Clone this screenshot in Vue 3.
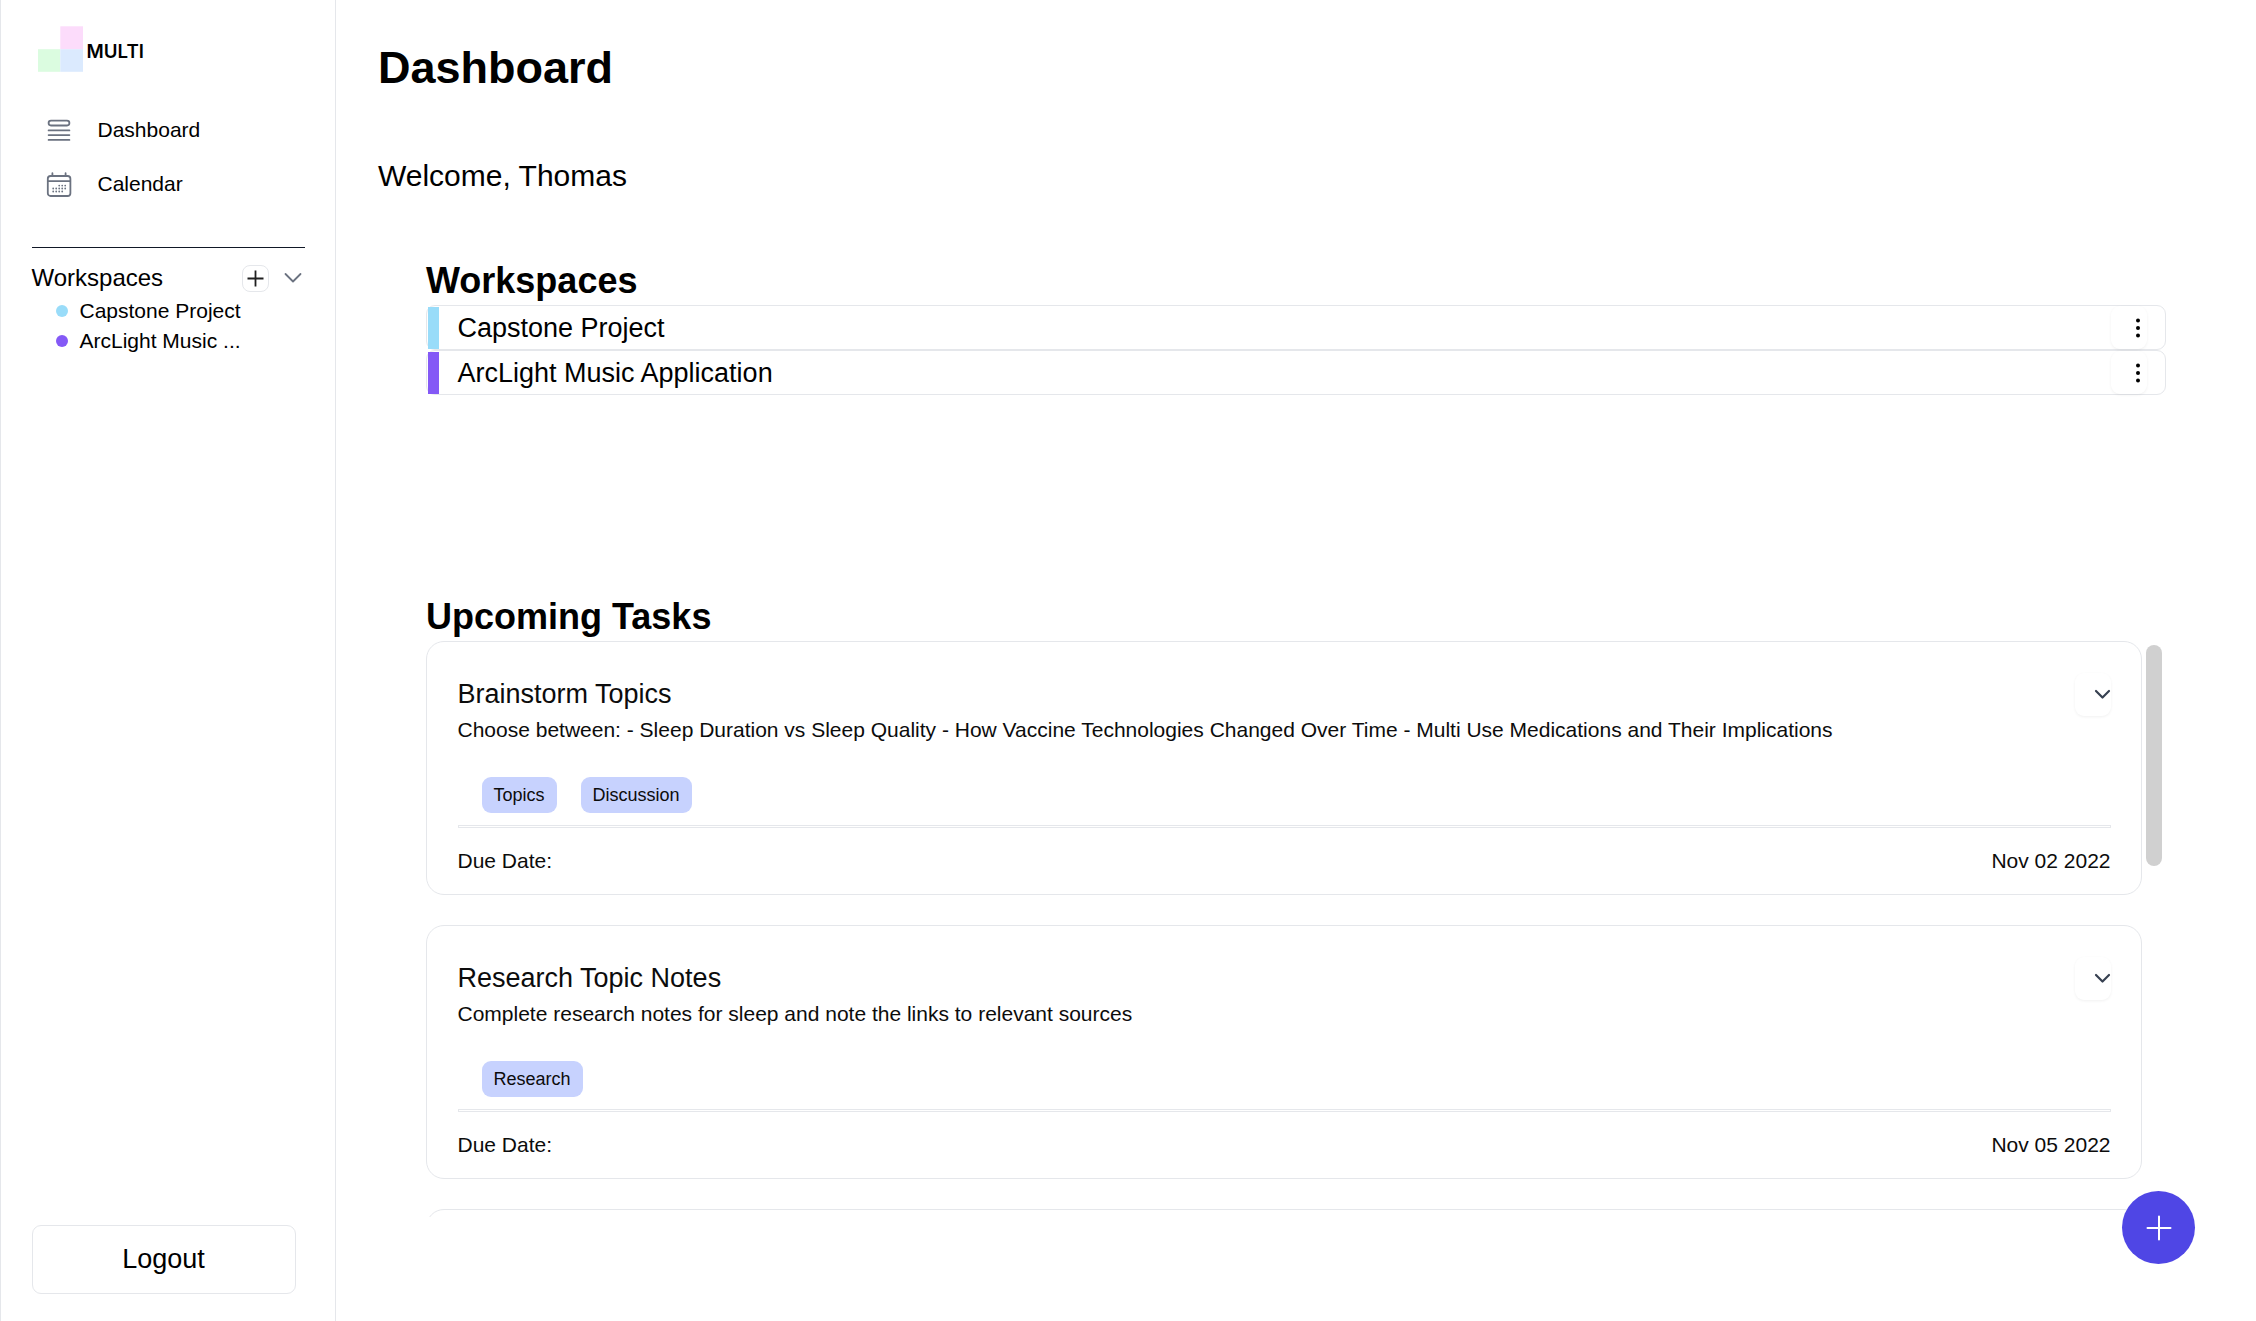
<script setup>
const workspaces = [
  { name: 'Capstone Project', short: 'Capstone Project', color: '#99dcf9' },
  { name: 'ArcLight Music Application', short: 'ArcLight Music ...', color: '#8459f6' },
]
const tasks = [
  {
    title: 'Brainstorm Topics',
    text: 'Choose between: - Sleep Duration vs Sleep Quality - How Vaccine Technologies Changed Over Time - Multi Use Medications and Their Implications',
    tags: ['Topics', 'Discussion'],
    due: 'Nov 02 2022',
  },
  {
    title: 'Research Topic Notes',
    text: 'Complete research notes for sleep and note the links to relevant sources',
    tags: ['Research'],
    due: 'Nov 05 2022',
  },
]
</script>

<template>
  <div class="app">
    <aside class="sidebar">
      <div class="brand">
        <svg class="logo" width="46" height="46" viewBox="0 0 46 46">
          <path d="M22.3 .3H45V23.2H22.3z" fill="#fcdcfb" />
          <path d="M0 23.2H22.3V45.8H0z" fill="#dbfce0" />
          <path d="M22.3 23.2H45V45.8H22.3z" fill="#dbeafe" />
        </svg>
        <span class="brand-name">MULTI</span>
      </div>
      <nav class="nav">
        <a class="nav-item">
          <svg width="27" height="27" viewBox="0 0 27 27" fill="none" stroke="#6b7280" stroke-width="1.8" stroke-linecap="round">
            <rect x="2.6" y="3.6" width="20.8" height="4.9" rx="2.4" />
            <path d="M2.6 13.4H23.4M2.6 18.1H23.4M2.6 22.9H23.4" />
          </svg>
          <span>Dashboard</span>
        </a>
        <a class="nav-item">
          <svg width="27" height="27" viewBox="0 0 27 27" fill="none" stroke="#6b7280" stroke-width="1.8" stroke-linecap="round">
            <path d="M6.4 2.2V5M19.6 2.2V5M1.8 10.1H24.2" />
            <rect x="1.8" y="5" width="22.6" height="20" rx="2.8" />
            <path d="M13.2 14.6h.01M16.2 14.6h.01M19.2 14.6h.01M7.2 17.5h.01M10.2 17.5h.01M13.2 17.5h.01M16.2 17.5h.01M19.2 17.5h.01M7.2 20.5h.01M10.2 20.5h.01M13.2 20.5h.01M16.2 20.5h.01" />
          </svg>
          <span>Calendar</span>
        </a>
      </nav>
      <div class="side-rule"></div>
      <div class="side-head">
        <span class="side-title">Workspaces</span>
        <button class="add">
          <svg width="17" height="17" viewBox="0 0 17 17" stroke="#1f1f1f" stroke-width="1.8" fill="none"><path d="M8.5 .5V16.5M.5 8.5H16.5" /></svg>
        </button>
        <svg class="side-chevron" width="18" height="12" viewBox="0 0 18 12" fill="none" stroke="#6b7280" stroke-width="1.8" stroke-linecap="round" stroke-linejoin="round"><path d="M1.5 2L9 9.5L16.5 2" /></svg>
      </div>
      <ul class="side-list">
        <li v-for="w in workspaces" :key="w.name">
          <i class="dot" :style="{ background: w.color }"></i>{{ w.short }}
        </li>
      </ul>
      <button class="logout">Logout</button>
    </aside>

    <main class="main">
      <h1>Dashboard</h1>
      <p class="welcome">Welcome, Thomas</p>
      <section class="spaces">
        <h2>Workspaces</h2>
        <div v-for="w in workspaces" :key="w.name" class="space">
          <i class="bar" :style="{ background: w.color }"></i>
          <span class="space-name">{{ w.name }}</span>
          <button class="more">
            <svg width="6" height="20" viewBox="0 0 6 20"><circle cx="3" cy="2.5" r="2" /><circle cx="3" cy="10" r="2" /><circle cx="3" cy="17.5" r="2" /></svg>
          </button>
        </div>
      </section>
      <section class="upcoming">
        <h2>Upcoming Tasks</h2>
        <div class="scroller">
          <div class="cards">
            <article v-for="t in tasks" :key="t.title" class="card">
              <div class="card-head">
                <h3>{{ t.title }}</h3>
                <button class="expand">
                  <svg width="17" height="11" viewBox="0 0 17 11" fill="none" stroke="#374151" stroke-width="2.2" stroke-linecap="round" stroke-linejoin="round"><path d="M2 2L8.5 8.5L15 2" /></svg>
                </button>
              </div>
              <p class="desc">{{ t.text }}</p>
              <div class="tags"><span v-for="g in t.tags" :key="g" class="tag">{{ g }}</span></div>
              <div class="rule"></div>
              <div class="due"><span>Due Date:</span><span>{{ t.due }}</span></div>
            </article>
            <article class="card"></article>
          </div>
          <div class="thumb"></div>
        </div>
      </section>
    </main>

    <button class="fab">
      <svg width="26" height="26" viewBox="0 0 26 26" fill="none" stroke="#fff" stroke-width="2" stroke-linecap="round"><path d="M13 1.5V24.5M1.5 13H24.5" /></svg>
    </button>
  </div>
</template>

<style>
body {
  background: #fff;
  overflow: hidden;
}
</style>

<style scoped>
* {
  box-sizing: border-box;
}
.app {
  display: flex;
  position: relative;
  height: 1321px;
  font-family: "Liberation Sans", Arial, sans-serif;
  font-size: 21px;
  line-height: 30px;
  color: #000;
}
h1, h2, h3, p, ul {
  margin: 0;
  padding: 0;
}
button {
  font: inherit;
  color: inherit;
  background: #fff;
  border: 0;
  padding: 0;
  display: flex;
  align-items: center;
  justify-content: center;
}
svg {
  display: block;
  flex: none;
}
.sidebar {
  width: 336px;
  flex: none;
  border: solid #e5e7eb;
  border-width: 0 1px;
  padding: 26px 30px 27px 31px;
  display: flex;
  flex-direction: column;
}
.brand {
  display: flex;
  height: 46px;
  padding-left: 5.6px;
}
.brand-name {
  font-family: Inter, sans-serif;
  font-weight: 600;
  font-size: 18.7px;
  line-height: 30px;
  margin: 11px 0 0 3px;
}
.nav {
  padding: 31px 0 0 14px;
}
.nav-item {
  display: flex;
  align-items: center;
  gap: 24.5px;
  height: 54px;
}
.side-rule {
  height: 1px;
  background: #111827;
  margin-top: 36px;
}
.side-head {
  display: flex;
  align-items: center;
  margin: 12px 0 0 -0.5px;
  height: 36px;
  font-size: 24px;
}
.side-title {
  width: 210.5px;
}
.add {
  width: 27px;
  height: 27px;
  border: 1px solid #e5e7eb;
  border-radius: 8px;
}
.side-chevron {
  margin-left: 15px;
}
.side-list {
  list-style: none;
}
.side-list li {
  display: flex;
  align-items: center;
  height: 30px;
  padding-left: 24px;
}
.dot {
  width: 12px;
  height: 12px;
  border-radius: 50%;
  margin-right: 11.5px;
}
.logout {
  width: 264px;
  height: 69px;
  margin-top: auto;
  border: 1px solid #e5e7eb;
  border-radius: 9px;
  font-size: 27px;
  padding: 0 1px 2px 0;
}
.main {
  flex: 1;
  padding: 41px 90px 0 42px;
}
h1 {
  font-size: 45px;
  line-height: 54px;
}
.welcome {
  font-size: 30px;
  line-height: 45px;
  margin-top: 58px;
}
h2 {
  font-size: 36px;
  line-height: 48px;
}
.spaces {
  margin: 59px 0 0 48px;
  height: 336px;
}
.space {
  display: flex;
  height: 45px;
  border: 1px solid #e5e7eb;
  border-radius: 9px;
  padding: 1px 18px 0 1px;
  font-size: 27px;
  line-height: 42px;
}
.bar {
  width: 11px;
  height: 42px;
}
.space-name {
  flex: 1;
  padding-left: 18.5px;
}
.more {
  width: 36px;
  height: 43px;
  margin-top: -1px;
  padding-left: 18px;
  border-radius: 9px;
  box-shadow: 0 1px 3px rgba(0, 0, 0, 0.06);
}
.upcoming {
  margin-left: 48px;
}
.scroller {
  display: flex;
  height: 576px;
  overflow: hidden;
}
.cards {
  width: 1716px;
}
.card {
  height: 254px;
  border: 1px solid #e5e7eb;
  border-radius: 18px;
  padding: 31px 30px 0 30.5px;
  margin-bottom: 30px;
  color: #0c0c0c;
}
.card-head {
  display: flex;
  justify-content: space-between;
  height: 42px;
}
h3 {
  font-size: 27px;
  font-weight: 400;
  line-height: 42px;
}
.expand {
  width: 36px;
  height: 43px;
  padding-left: 18px;
  border-radius: 9px;
  box-shadow: 0 1px 3px rgba(0, 0, 0, 0.06);
}
.tags {
  display: flex;
  gap: 24px;
  margin: 32px 0 12px 24px;
}
.tag {
  height: 36px;
  line-height: 36px;
  padding: 0 12px;
  border-radius: 9px;
  background: #c7d2fe;
  font-size: 18px;
}
.rule {
  height: 3px;
  border: 1px solid #e5e7eb;
}
.due {
  display: flex;
  justify-content: space-between;
  margin-top: 18px;
  padding-right: 0.5px;
}
.thumb {
  width: 16px;
  height: 221px;
  margin: 4px 0 0 4px;
  border-radius: 8px;
  background: #d0d0d0;
}
.fab {
  position: absolute;
  left: 2122px;
  top: 1191px;
  width: 73px;
  height: 73px;
  border-radius: 50%;
  background: #4f46e5;
}
</style>
